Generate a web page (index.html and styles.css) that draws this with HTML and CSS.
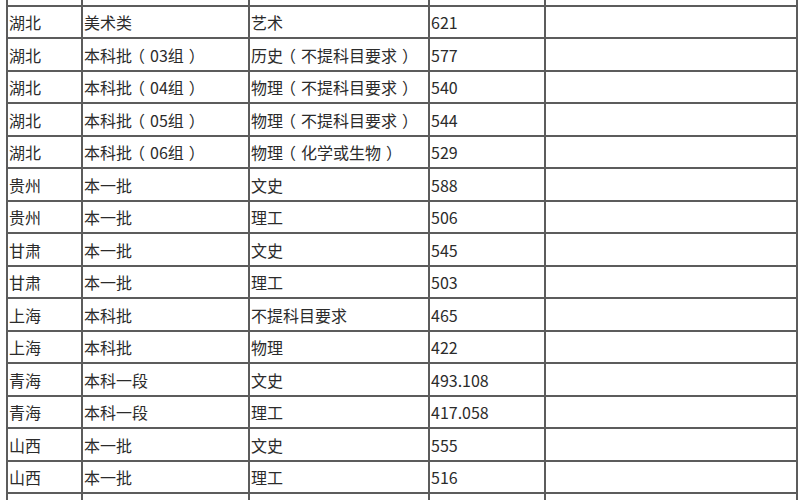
FILE: index.html
```html
<!DOCTYPE html>
<html lang="zh-CN">
<head>
<meta charset="utf-8">
<title>分数线</title>
<link rel="stylesheet" href="styles.css">
</head>
<body>
<div class="sheet">
<table class="grid">
<colgroup>
<col class="c1"><col class="c2"><col class="c3"><col class="c4"><col class="c5">
</colgroup>
<tbody>
<tr class="cut"><td></td><td></td><td></td><td></td><td></td></tr>
<tr><td>湖北</td><td>美术类</td><td>艺术</td><td>621</td><td></td></tr>
<tr><td>湖北</td><td>本科批<span class="p">（</span>03组<span class="p">）</span></td><td>历史<span class="p">（</span>不提科目要求<span class="p">）</span></td><td>577</td><td></td></tr>
<tr><td>湖北</td><td>本科批<span class="p">（</span>04组<span class="p">）</span></td><td>物理<span class="p">（</span>不提科目要求<span class="p">）</span></td><td>540</td><td></td></tr>
<tr><td>湖北</td><td>本科批<span class="p">（</span>05组<span class="p">）</span></td><td>物理<span class="p">（</span>不提科目要求<span class="p">）</span></td><td>544</td><td></td></tr>
<tr><td>湖北</td><td>本科批<span class="p">（</span>06组<span class="p">）</span></td><td>物理<span class="p">（</span>化学或生物<span class="p">）</span></td><td>529</td><td></td></tr>
<tr><td>贵州</td><td>本一批</td><td>文史</td><td>588</td><td></td></tr>
<tr><td>贵州</td><td>本一批</td><td>理工</td><td>506</td><td></td></tr>
<tr><td>甘肃</td><td>本一批</td><td>文史</td><td>545</td><td></td></tr>
<tr><td>甘肃</td><td>本一批</td><td>理工</td><td>503</td><td></td></tr>
<tr><td>上海</td><td>本科批</td><td>不提科目要求</td><td>465</td><td></td></tr>
<tr><td>上海</td><td>本科批</td><td>物理</td><td>422</td><td></td></tr>
<tr><td>青海</td><td>本科一段</td><td>文史</td><td>493.108</td><td></td></tr>
<tr><td>青海</td><td>本科一段</td><td>理工</td><td>417.058</td><td></td></tr>
<tr><td>山西</td><td>本一批</td><td>文史</td><td>555</td><td></td></tr>
<tr><td>山西</td><td>本一批</td><td>理工</td><td>516</td><td></td></tr>
<tr><td></td><td></td><td></td><td></td><td></td></tr>
</tbody>
</table>
</div>
</body>
</html>
```

FILE: styles.css
```css
html, body {
  margin: 0;
  padding: 0;
  background: #ffffff;
}
.sheet {
  width: 800px;
  height: 500px;
  overflow: hidden;
}
.grid {
  border-collapse: collapse;
  table-layout: fixed;
  width: 790px;
  margin-left: 6px;
  margin-top: -27px;
  font-family: "Microsoft YaHei", "Noto Sans CJK SC", sans-serif;
  font-size: 16px;
  color: #2b2b2b;
}
.c1 { width: 75px; }
.c2 { width: 167px; }
.c3 { width: 180px; }
.c4 { width: 116px; }
.c5 { width: 252px; }
.grid td {
  border: 2px solid #5c5c5c;
  height: 32.5px;
  padding: 1px 0 0 1px;
  box-sizing: border-box;
  white-space: nowrap;
  vertical-align: middle;
  line-height: 1;
}
.grid .p {
  font-feature-settings: "halt";
  padding: 0 5px;
}
.grid .cut td {
  border-top: none;
}
```
